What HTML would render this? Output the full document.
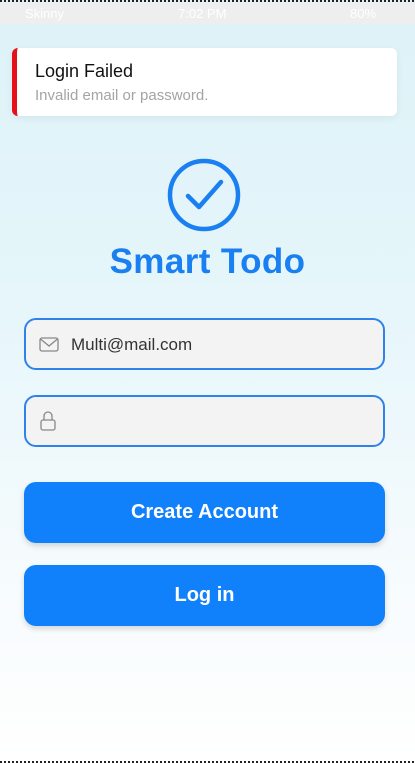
<!DOCTYPE html>
<html><head><meta charset="utf-8"><style>
*{margin:0;padding:0;box-sizing:border-box}
body{width:415px;height:763px;overflow:hidden;font-family:"Liberation Sans",sans-serif;position:relative;background:linear-gradient(#ddf2f7 0%,#e6f6fb 40%,#f6fbfd 75%,#fff 100%)}
.dots{position:absolute;left:0;width:415px;height:2px;background:repeating-linear-gradient(90deg,#222 0 2px,transparent 2px 4px)}
.sb{position:absolute;top:2px;left:0;width:415px;height:22px;background:#efeeee;color:#fff;font-size:13px}
.card{position:absolute;left:12px;top:48px;width:385px;height:68px;background:#fff;border-radius:6px;border-left:5px solid #e5101a;box-shadow:0 2px 8px rgba(0,0,0,.06)}
.card .t{position:absolute;left:18px;top:13px;font-size:18px;color:#111}
.card .s{position:absolute;left:18px;top:39px;font-size:15px;color:#a4a4a4}
h1{position:absolute;top:242px;width:100%;text-align:center;font-size:35px;letter-spacing:0.4px;font-weight:bold;color:#1a7ff0}
.in{position:absolute;left:24px;width:361px;height:52px;border:2px solid #2f82ea;border-radius:12px;background:#f3f3f3}
.in span{position:absolute;left:45px;top:15px;font-size:17px;color:#333}
.btn{position:absolute;left:24px;width:361px;height:61px;border-radius:12px;background:#1181fb;color:#fff;font-weight:bold;font-size:20px;text-align:center;line-height:61px;box-shadow:0 3px 6px rgba(0,0,0,.15)}
</style></head><body>
<div class="dots" style="top:0"></div>
<div class="sb"><span style="position:absolute;left:25px;top:4px">Skinny</span><span style="position:absolute;left:178px;top:4px">7:02 PM</span><span style="position:absolute;left:350px;top:4px">80%</span></div>
<div class="card"><div class="t">Login Failed</div><div class="s">Invalid email or password.</div></div>
<svg style="position:absolute;left:164px;top:155px" width="80" height="80" viewBox="0 0 80 80"><circle cx="40" cy="40" r="34" fill="none" stroke="#1a7ff0" stroke-width="4.5"/><polyline points="24,41 35,52 57,27" fill="none" stroke="#1a7ff0" stroke-width="4.5" stroke-linecap="round" stroke-linejoin="round"/></svg>
<h1>Smart Todo</h1>
<div class="in" style="top:318px"><svg style="position:absolute;left:13px;top:17px" width="20" height="15" viewBox="0 0 20 15"><rect x="1" y="1" width="18" height="13" rx="2" fill="none" stroke="#888" stroke-width="1.3"/><polyline points="1.5,2 10,9 18.5,2" fill="none" stroke="#888" stroke-width="1.3"/></svg><span>Multi@mail.com</span></div>
<div class="in" style="top:395px"><svg style="position:absolute;left:14px;top:13px" width="16" height="22" viewBox="0 0 16 22"><path d="M4 10V6a4 4 0 0 1 8 0v4" fill="none" stroke="#888" stroke-width="1.3"/><rect x="1" y="10" width="14" height="10" rx="2" fill="none" stroke="#888" stroke-width="1.3"/></svg></div>
<div class="btn" style="top:482px">Create Account</div>
<div class="btn" style="top:565px">Log in</div>
<div class="dots" style="top:761px"></div>
</body></html>
